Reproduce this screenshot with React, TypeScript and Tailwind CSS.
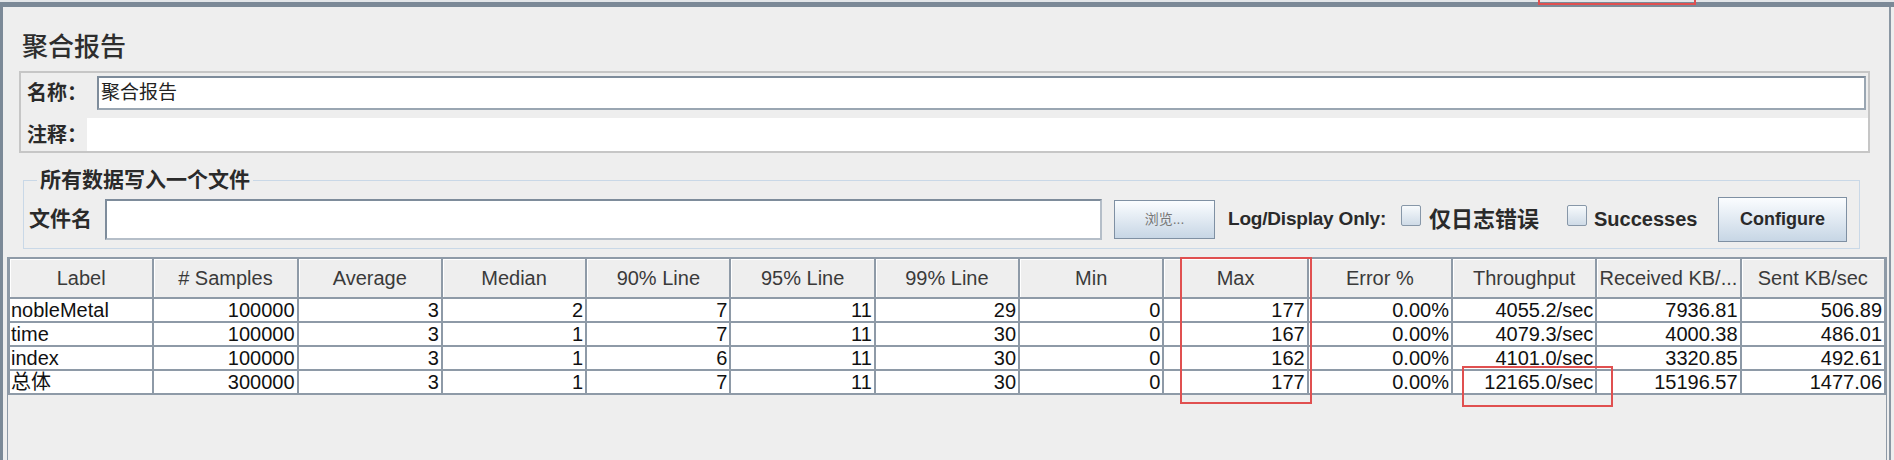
import React from 'react';

const columns = [
  'Label',
  '# Samples',
  'Average',
  'Median',
  '90% Line',
  '95% Line',
  '99% Line',
  'Min',
  'Max',
  'Error %',
  'Throughput',
  'Received KB/...',
  'Sent KB/sec',
];

const rows = [
  ['nobleMetal', '100000', '3', '2', '7', '11', '29', '0', '177', '0.00%', '4055.2/sec', '7936.81', '506.89'],
  ['time', '100000', '3', '1', '7', '11', '30', '0', '167', '0.00%', '4079.3/sec', '4000.38', '486.01'],
  ['index', '100000', '3', '1', '6', '11', '30', '0', '162', '0.00%', '4101.0/sec', '3320.85', '492.61'],
  ['总体', '300000', '3', '1', '7', '11', '30', '0', '177', '0.00%', '12165.0/sec', '15196.57', '1477.06'],
];

function CheckBox() {
  return (
    <span className="inline-block h-[21px] w-[20px] shrink-0 rounded-[2px] border border-[#8797a8] bg-linear-to-b from-[#f7fafc] to-[#cfdbe7]" />
  );
}

export default function App() {
  return (
    <div className="relative h-[460px] w-[1894px] overflow-hidden bg-[#eeeeee] font-['Liberation_Sans','Noto_Sans_CJK_SC',sans-serif] text-[#222]">
      {/* window top edge */}
      <div className="h-[7px] border-t-2 border-[#e3e6e9] bg-[#7b8997]" />
      <div className="flex h-[453px]">
        <div className="w-[3px] bg-[#7b8997]" />
        <div className="flex w-[1886px] flex-col">
          <h1 className="mt-[24px] ml-[19px] h-[32px] text-[26px] leading-[32px] font-medium text-[#2e2e2e]">聚合报告</h1>

          {/* name / comment panel */}
          <div className="mt-[8px] ml-[16px] flex h-[82px] w-[1851px] flex-col border-2 border-[#c6c6c6]">
            <div className="flex h-[45px] items-start pt-[3px]">
              <span className="w-[76px] pt-[4px] pl-[6px] text-[20px] leading-[26px] font-bold text-[#2a2a2a]">名称：</span>
              <div className="mr-[2px] flex h-[34px] flex-1 items-center border-2 border-t-[#7e8c9b] border-l-[#7e8c9b] border-r-[#9aa6b2] border-b-[#9aa6b2] bg-white pl-[2px] text-[19px] text-[#222]">
                聚合报告
              </div>
            </div>
            <div className="flex h-[33px] items-center">
              <span className="w-[66px] pl-[6px] text-[20px] leading-[26px] font-bold text-[#2a2a2a]">注释：</span>
              <div className="h-full flex-1 bg-white" />
            </div>
          </div>

          {/* write results to file */}
          <fieldset className="mt-[15px] ml-[20px] w-[1837px] border border-[#c9d8e7] px-[5px] pb-[6px]">
            <legend className="ml-[8px] px-[3px] text-[21px] leading-[24px] font-bold text-[#2a2a2a]">所有数据写入一个文件</legend>
            <div className="mt-[4px] flex h-[46px] items-center">
              <span className="w-[76px] text-[21px] font-bold text-[#2a2a2a]">文件名</span>
              <div className="h-[41px] w-[997px] border-2 border-t-[#7e8c9b] border-l-[#7e8c9b] border-r-[#b5bec8] border-b-[#b5bec8] bg-white" />
              <button className="ml-[12px] flex h-[39px] w-[101px] items-center justify-center border border-[#7f90a3] bg-linear-to-b from-[#fbfdff] to-[#c7d6e5] text-[14px] text-[#777]">
                浏览...
              </button>
              <span className="ml-[13px] w-[166px] text-[19px] font-bold tracking-[-0.2px] text-[#2a2a2a]">Log/Display Only:</span>
              <span className="ml-[7px]"><CheckBox /></span>
              <span className="ml-[8px] w-[130px] text-[22px] font-bold text-[#2a2a2a]">仅日志错误</span>
              <span className="ml-[8px]"><CheckBox /></span>
              <span className="ml-[7px] w-[120px] text-[20px] font-bold text-[#2a2a2a]">Successes</span>
              <button className="ml-[4px] flex h-[45px] w-[129px] items-center justify-center border border-[#7f90a3] bg-linear-to-b from-[#fbfdff] to-[#c7d6e5] text-[18px] font-bold text-[#2a2a2a]">
                Configure
              </button>
            </div>
          </fieldset>

          {/* results table */}
          <div className="mt-[8px] ml-[4px] w-[1880px] flex-1 border-x border-[#8d99a6]">
            <table className="w-full table-fixed border-collapse text-[20px] leading-[22px]">
              <thead>
                <tr className="h-[40px]">
                  {columns.map((c) => (
                    <th
                      key={c}
                      className="overflow-hidden border-2 border-[#8e9aa7] bg-[#eeeeee] px-[2px] text-center font-normal whitespace-nowrap text-[#3a3a3a] shadow-[inset_1px_1px_0_#ffffff]"
                    >
                      {c}
                    </th>
                  ))}
                </tr>
              </thead>
              <tbody>
                {rows.map((r) => (
                  <tr key={r[0]} className="h-[24px] bg-white">
                    {r.map((v, i) => (
                      <td
                        key={i}
                        className={
                          i === 0
                            ? 'overflow-hidden border-2 border-[#8e9aa7] pl-[1px] text-left whitespace-nowrap text-[#111]'
                            : 'overflow-hidden border-2 border-[#8e9aa7] pr-[2px] text-right whitespace-nowrap text-[#111]'
                        }
                      >
                        {v}
                      </td>
                    ))}
                  </tr>
                ))}
              </tbody>
            </table>
          </div>
        </div>
        <div className="w-[2px] bg-[#8a97a3]" />
        <div className="w-[3px] bg-[#eeeeee]" />
      </div>

      {/* red annotation boxes */}
      <div className="absolute top-[-10px] left-[1538px] h-[15px] w-[158px] border-2 border-[#e05050]" />
      <div className="absolute top-[257px] left-[1180px] h-[147px] w-[132px] border-2 border-[#e05050]" />
      <div className="absolute top-[366px] left-[1462px] h-[41px] w-[151px] border-2 border-[#e05050]" />
    </div>
  );
}
